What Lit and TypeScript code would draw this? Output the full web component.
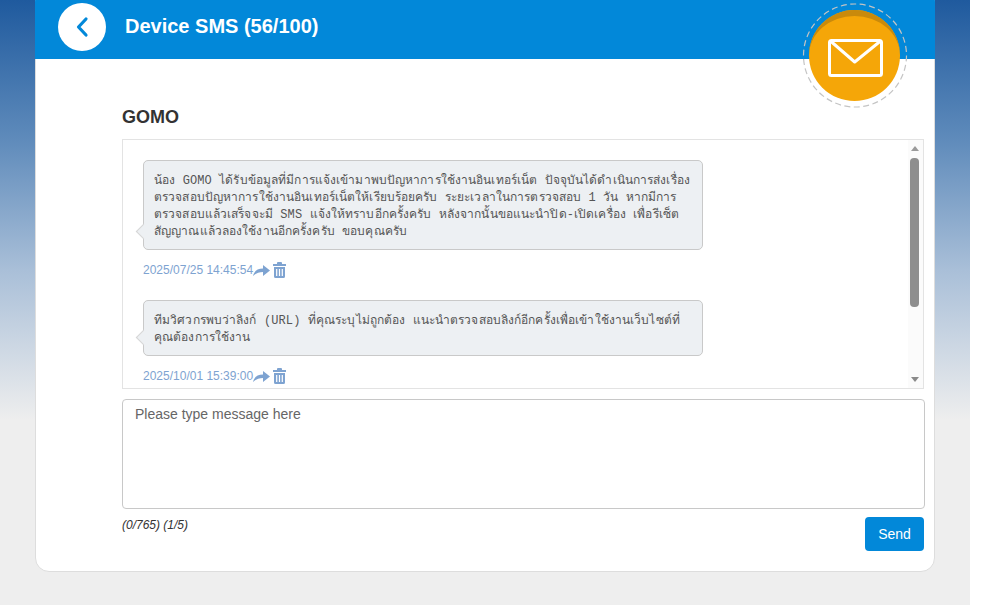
import { LitElement, html, css } from "lit";
import { customElement } from "lit/decorators.js";

const messages = [
  {
    text: "น้อง GOMO ได้รับข้อมูลที่มีการแจ้งเข้ามาพบปัญหาการใช้งานอินเทอร์เน็ต ปัจจุบันได้ดำเนินการส่งเรื่องตรวจสอบปัญหาการใช้งานอินเทอร์เน็ตให้เรียบร้อยครับ ระยะเวลาในการตรวจสอบ 1 วัน หากมีการตรวจสอบแล้วเสร็จจะมี SMS แจ้งให้ทราบอีกครั้งครับ หลังจากนั้นขอแนะนำปิด-เปิดเครื่อง เพื่อรีเซ็ตสัญญาณแล้วลองใช้งานอีกครั้งครับ ขอบคุณครับ",
    time: "2025/07/25 14:45:54",
  },
  {
    text: "ทีมวิศวกรพบว่าลิงก์ (URL) ที่คุณระบุไม่ถูกต้อง แนะนำตรวจสอบลิงก์อีกครั้งเพื่อเข้าใช้งานเว็บไซต์ที่คุณต้องการใช้งาน",
    time: "2025/10/01 15:39:00",
  },
];

@customElement("app-root")
export class AppRoot extends LitElement {
  static styles = css`
    :host {
      display: block;
      width: 970px;
      height: 605px;
      overflow: hidden;
      font-family: "Liberation Sans", Arial, sans-serif;
      background: linear-gradient(to bottom, #1f5a9e 0, #5f8bbb 140px, #a9bfd8 270px, #eeeeee 420px, #eeeeee 100%);
    }
    .card {
      margin: -12px 35px 0;
      height: 584px;
      box-sizing: border-box;
      background: #fff;
      border: 1px solid #dddddd;
      border-radius: 14px;
      overflow: visible;
      position: relative;
      display: flex;
      flex-direction: column;
    }
    .head {
      height: 71px;
      margin: -1px -1px 0;
      flex: none;
      box-sizing: border-box;
      padding: 15px 0 0 23px;
      background: #0288d9;
      border-radius: 14px 14px 0 0;
      display: flex;
      align-items: flex-start;
      gap: 19px;
      color: #fff;
    }
    .back {
      width: 48px;
      height: 48px;
      border-radius: 50%;
      background: #fff;
      flex: none;
      display: flex;
      align-items: center;
      justify-content: center;
    }
    .head h1 {
      margin: 11px 0 0;
      font-size: 20px;
      line-height: 24px;
      font-weight: 700;
    }
    .badge {
      position: absolute;
      left: 766px;
      top: 14px;
      width: 106px;
      height: 106px;
    }
    .body {
      padding: 47px 9px 0 86px;
      flex: 1;
      display: flex;
      flex-direction: column;
    }
    h2 {
      margin: 0 0 11px;
      font-size: 18px;
      line-height: 22px;
      font-weight: 700;
      color: #333;
    }
    .box {
      width: 802px;
      height: 250px;
      box-sizing: border-box;
      border: 1px solid #e3e3e3;
      display: flex;
      overflow: hidden;
    }
    .list {
      flex: 1;
      min-width: 0;
      overflow: hidden;
      padding: 20px 0 0 20px;
    }
    .msg { margin-bottom: 21px; }
    .bubble {
      position: relative;
      width: 560px;
      box-sizing: border-box;
      padding: 12px 10px 8px 10px;
      background: #edf0f3;
      border: 1px solid #c9c9c9;
      border-radius: 5px;
      font-family: "Liberation Mono", "DejaVu Sans Mono", "Noto Sans", monospace;
      font-size: 12px;
      line-height: 17px;
      letter-spacing: 0.115px;
      color: #555;
    }
    .bubble::before {
      content: "";
      position: absolute;
      left: -6px;
      bottom: 12px;
      width: 10px;
      height: 10px;
      background: #edf0f3;
      border-left: 1px solid #d6d6d6;
      border-bottom: 1px solid #d6d6d6;
      transform: rotate(45deg);
    }
    .meta {
      margin-top: 11px;
      display: flex;
      align-items: center;
      height: 18px;
      font-size: 12px;
      color: #7ea3d1;
      gap: 3px;
    }
    .meta svg { display: block; flex: none; }
    .meta .arrow { margin-left: -3px; }
    .bar {
      width: 15px;
      box-sizing: border-box;
      padding-right: 2px;
      flex: none;
      background: #fbfbfb;
      display: flex;
      flex-direction: column;
      align-items: center;
    }
    .up, .down {
      width: 0;
      height: 0;
      border-left: 4.5px solid transparent;
      border-right: 4.5px solid transparent;
      flex: none;
    }
    .up { border-bottom: 5px solid #9a9a9a; margin-top: 6px; }
    .down { border-top: 5px solid #8a8a8a; margin-top: 70px; }
    .thumb {
      width: 9px;
      height: 149px;
      margin-top: 7px;
      border-radius: 4px;
      background: #8e8e8e;
      flex: none;
    }
    .input {
      margin-top: 10px;
      width: 803px;
      height: 110px;
      box-sizing: border-box;
      border: 1px solid #c8c8c8;
      border-radius: 4px;
      padding: 6px 12px;
      font-size: 14px;
      line-height: 17px;
      color: #666;
    }
    .foot {
      display: flex;
      justify-content: space-between;
      align-items: flex-start;
      width: 802px;
      margin-top: 8px;
    }
    .count {
      font-size: 12px;
      line-height: 16px;
      font-style: italic;
      color: #333;
    }
    .send {
      width: 59px;
      height: 34px;
      border-radius: 4px;
      background: #0288d9;
      color: #fff;
      font-size: 14px;
      display: flex;
      align-items: center;
      justify-content: center;
    }
  `;

  render() {
    return html`
      <div class="card">
        <div class="head">
          <div class="back">
            <svg width="14" height="22" viewBox="0 0 14 22">
              <path d="M11 3 L3.5 11 L11 19" fill="none" stroke="#0288d9" stroke-width="3.2" stroke-linecap="round" stroke-linejoin="round" />
            </svg>
          </div>
          <h1>Device SMS (56/100)</h1>
        </div>
        <svg class="badge" viewBox="0 0 106 106">
          <circle cx="53" cy="52.5" r="51.5" fill="none" stroke="#c4c4c4" stroke-width="1.2" stroke-dasharray="6 3.5" />
          <circle cx="52.5" cy="52.5" r="45.5" fill="#f5a608" />
          <path d="M7 52.5 A45.5 45.5 0 0 1 98 52.5 A45.5 39.5 0 0 0 7 52.5 Z" fill="#c98a0c" />
          <rect x="27.5" y="37.5" width="52" height="35" rx="2" fill="none" stroke="#fff" stroke-width="3" />
          <path d="M28.5 38 L52.7 59 L78.5 38" fill="none" stroke="#fff" stroke-width="3" stroke-linejoin="round" />
        </svg>
        <div class="body">
          <h2>GOMO</h2>
          <div class="box">
            <div class="list">
              ${messages.map(
                (m) => html`
                  <div class="msg">
                    <div class="bubble">${m.text}</div>
                    <div class="meta">
                      <span>${m.time}</span>
                      <svg class="arrow" width="17" height="13" viewBox="0 0 17 13">
                        <path d="M0 12 C1.5 6.5 5 4.5 10 4.5 L10 1 L17 6.5 L10 12 L10 8 C6 8 3 9 0 12 Z" fill="#7ea3d1" />
                      </svg>
                      <svg width="13" height="16" viewBox="0 0 13 16">
                        <path d="M4 2 V1 Q4 0 5 0 H8 Q9 0 9 1 V2 H13 V4 H0 V2 Z M1 5 H12 V14.5 Q12 16 10.5 16 H2.5 Q1 16 1 14.5 Z" fill="#7ea3d1" />
                        <path d="M3.7 7 V14 M6.5 7 V14 M9.3 7 V14" stroke="#fff" stroke-width="1.2" />
                      </svg>
                    </div>
                  </div>
                `
              )}
            </div>
            <div class="bar">
              <div class="up"></div>
              <div class="thumb"></div>
              <div class="down"></div>
            </div>
          </div>
          <div class="input">Please type message here</div>
          <div class="foot">
            <div class="count">(0/765) (1/5)</div>
            <div class="send">Send</div>
          </div>
        </div>
      </div>
    `;
  }
}
